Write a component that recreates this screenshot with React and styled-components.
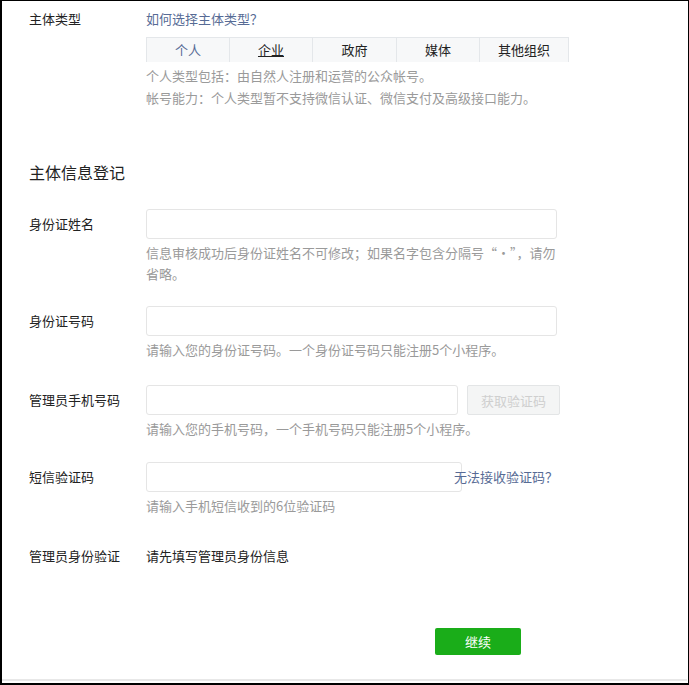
import React from "react";
import styled, { createGlobalStyle } from "styled-components";

const Global = createGlobalStyle`
  html, body { margin: 0; padding: 0; background: #fff; }
  body { font-family: "Noto Sans CJK SC", "Noto Sans", sans-serif; color: #333; }
  * { box-sizing: border-box; }
`;

const Frame = styled.div`
  width: 689px;
  height: 685px;
  border-top: 1px solid #000;
  border-left: 2px solid #000;
  border-right: 1px solid #000;
  border-bottom: 2px solid #000;
  display: flex;
  flex-direction: column;
  overflow: hidden;
`;

const Inner = styled.div`
  width: 685px;
  flex: 1;
  display: flex;
  flex-direction: column;
  border-bottom: 2px solid #e8e8e8;
  margin-bottom: 2px;
`;

const Content = styled.div`
  padding: 8px 0 0 27px;
  flex: 1;
  display: flex;
  flex-direction: column;
`;

const Row = styled.div`
  display: grid;
  grid-template-columns: 117px 1fr;
  align-items: start;
  margin-bottom: ${(p) => p.$mb || 0}px;
`;

const Label = styled.div`
  font-size: 13px;
  color: #222;
  line-height: ${(p) => p.$lh || 30}px;
  white-space: nowrap;
`;

const Field = styled.div`
  display: flex;
  flex-direction: column;
`;

const Link = styled.a`
  font-size: 13px;
  color: #576b95;
  line-height: 20px;
  text-decoration: none;
  white-space: nowrap;
`;

const Tabs = styled.div`
  display: flex;
  margin-top: 8px;
  height: 25px;
`;

const Tab = styled.div`
  width: ${(p) => p.$w}px;
  height: 25px;
  background: #f7f8f9;
  border-top: 1px solid #e4e7ea;
  border-left: 1px solid #e4e7ea;
  border-right: ${(p) => (p.$last ? "1px solid #e4e7ea" : "none")};
  font-size: 13px;
  line-height: 24px;
  text-align: center;
  color: ${(p) => (p.$active ? "#576b95" : "#222")};
  text-decoration: ${(p) => (p.$hover ? "underline" : "none")};
`;

const Desc = styled.div`
  font-size: 13px;
  color: #9a9a9a;
  line-height: ${(p) => p.$lh || 21}px;
  margin-top: ${(p) => p.$mt || 3}px;
  width: ${(p) => p.$w || 420}px;
`;

const Title = styled.div`
  font-size: 16px;
  line-height: 24px;
  color: #222;
  margin: 51px 0 25px;
`;

const Input = styled.input`
  width: ${(p) => p.$w}px;
  height: 30px;
  border: 1px solid #e5e5e5;
  border-radius: 3px;
  background: #fff;
  outline: none;
  padding: 0 8px;
  font-size: 13px;
`;

const InputLine = styled.div`
  display: flex;
  align-items: center;
`;

const GhostButton = styled.button`
  margin-left: 9px;
  width: 93px;
  height: 30px;
  border: 1px solid #e3e5e6;
  border-radius: 2px;
  background: #f4f5f5;
  color: #cfcfcf;
  font-size: 13px;
  font-family: inherit;
  padding: 0;
`;

const SideLink = styled(Link)`
  margin-left: -8px;
  position: relative;
`;

const Plain = styled.div`
  font-size: 13px;
  color: #222;
  line-height: 30px;
`;

const Footer = styled.div`
  display: flex;
  justify-content: flex-start;
  padding-left: 406px;
  margin-top: 57px;
`;

const Primary = styled.button`
  width: 86px;
  height: 27px;
  border: none;
  border-radius: 2px;
  background: #1aad19;
  color: #fff;
  font-size: 13px;
  font-family: inherit;
  padding: 0;
`;

const tabs = [
  { t: "个人", w: 83, active: true },
  { t: "企业", w: 83, hover: true },
  { t: "政府", w: 84 },
  { t: "媒体", w: 83 },
  { t: "其他组织", w: 90, last: true },
];

export default function App() {
  return (
    <>
      <Global />
      <Frame>
        <Inner>
          <Content>
            <Row>
              <Label $lh={20}>主体类型</Label>
              <Field>
                <Link>如何选择主体类型？</Link>
                <Tabs>
                  {tabs.map((x) => (
                    <Tab key={x.t} $w={x.w} $active={x.active} $hover={x.hover} $last={x.last}>
                      {x.t}
                    </Tab>
                  ))}
                </Tabs>
                <Desc $lh={22} $mt={3} $w={430}>
                  个人类型包括：由自然人注册和运营的公众帐号。
                  <br />
                  帐号能力：个人类型暂不支持微信认证、微信支付及高级接口能力。
                </Desc>
              </Field>
            </Row>

            <Title>主体信息登记</Title>

            <Row $mb={22}>
              <Label>身份证姓名</Label>
              <Field>
                <Input $w={411} />
                <Desc $w={420}>
                  信息审核成功后身份证姓名不可修改；如果名字包含分隔号“·”，请勿省略。
                </Desc>
              </Field>
            </Row>

            <Row $mb={25}>
              <Label>身份证号码</Label>
              <Field>
                <Input $w={411} />
                <Desc>请输入您的身份证号码。一个身份证号码只能注册5个小程序。</Desc>
              </Field>
            </Row>

            <Row $mb={23}>
              <Label>管理员手机号码</Label>
              <Field>
                <InputLine>
                  <Input $w={312} />
                  <GhostButton>获取验证码</GhostButton>
                </InputLine>
                <Desc>请输入您的手机号码，一个手机号码只能注册5个小程序。</Desc>
              </Field>
            </Row>

            <Row $mb={25}>
              <Label>短信验证码</Label>
              <Field>
                <InputLine>
                  <Input $w={316} />
                  <SideLink>无法接收验证码？</SideLink>
                </InputLine>
                <Desc>请输入手机短信收到的6位验证码</Desc>
              </Field>
            </Row>

            <Row>
              <Label>管理员身份验证</Label>
              <Plain>请先填写管理员身份信息</Plain>
            </Row>

            <Footer>
              <Primary>继续</Primary>
            </Footer>
          </Content>
        </Inner>
      </Frame>
    </>
  );
}
